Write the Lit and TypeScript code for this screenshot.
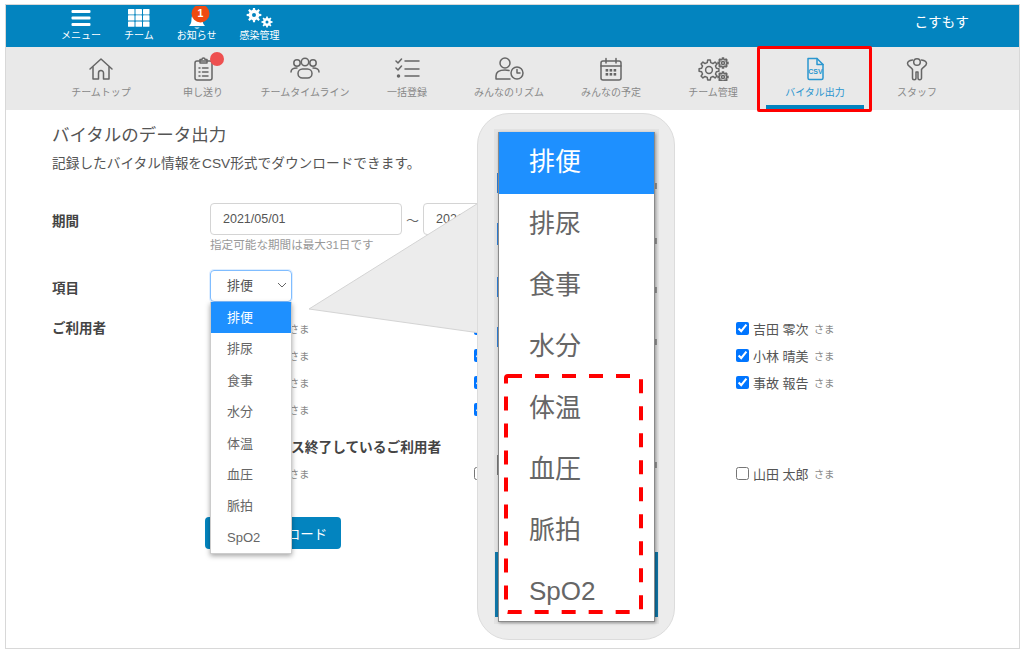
import { LitElement, html, css, svg } from 'lit';
import { customElement } from 'lit/decorators.js';

const OPTIONS = ['排便', '排尿', '食事', '水分', '体温', '血圧', '脈拍', 'SpO2'];

const USERS = [
  ['青木 一郎', '伊藤 和子', '吉田 零次'],
  ['上田 次郎', '加藤 正男', '小林 晴美'],
  ['大野 花子', '木村 幸子', '事故 報告'],
  ['岡田 三郎', '斎藤 春子', ''],
];
const RETIRED = ['佐藤 良子', '田中 健一', '山田 太郎'];

// spots of the page that show beside the enlarged list
const BLIPS = [
  [497, 173, 20, '#2f80d8'], [497, 223, 22, '#2f80d8'], [497, 277, 20, '#2f80d8'], [497, 327, 20, '#2f80d8'],
  [655, 183, 6, '#999'], [655, 238, 6, '#999'], [655, 287, 6, '#999'], [655, 339, 6, '#999'],
  [497, 455, 20, '#777'], [655, 462, 6, '#999'],
];

function gearPath(cx: number, cy: number, r1: number, r2: number, teeth: number) {
  const pts: string[] = [];
  const step = (Math.PI * 2) / teeth;
  for (let i = 0; i < teeth; i++) {
    const a = i * step;
    [[-0.3, r1], [-0.17, r2], [0.17, r2], [0.3, r1]].forEach(([t, r]) => {
      const x = cx + Math.cos(a + t * step) * r;
      const y = cy + Math.sin(a + t * step) * r;
      pts.push(`${x.toFixed(2)} ${y.toFixed(2)}`);
    });
  }
  return 'M' + pts.join('L') + 'Z';
}

const menuIcon = html`<svg width="20" height="18" viewBox="0 0 20 18"><g fill="#fff">
  <rect x="0.5" y="1" width="19" height="3" rx="1"/><rect x="0.5" y="7.5" width="19" height="3" rx="1"/><rect x="0.5" y="14" width="19" height="3" rx="1"/>
</g></svg>`;

const gridIcon = html`<svg width="22" height="18" viewBox="0 0 22 18"><g fill="#fff">
  ${[0, 7.5, 15].map((x) => [0, 6.2, 12.4].map((y) => svg`<rect x=${x} y=${y} width="6.5" height="5.4" rx="0.6"/>`))}
</g></svg>`;

const bellIcon = html`<svg class="bell" width="26" height="24" viewBox="0 0 26 24">
  <path fill="#fff" d="M5 20c2-2 2.5-4 2.5-7 0-3.500 2.500-6 5.500-6s5.500 2.500 5.500 6c0 3 .5 5 2.500 7z"/>
  <path fill="#fff" d="M10.500 21.500h5c-.5 1.500-4.500 1.500-5 0z"/>
  <circle cx="16.500" cy="7.500" r="9" fill="#ef4a10"/>
  <text x="16.500" y="11.300" font-size="10.500" font-weight="700" fill="#fff" text-anchor="middle" font-family="Liberation Sans">1</text>
</svg>`;

const infectionIcon = html`<svg class="gears" width="34" height="20" viewBox="0 0 34 20">
  <path fill="#fff" fill-rule="evenodd" d=${gearPath(11, 7, 5.3, 7.4, 8) + 'M13 7a2 2 0 1 0-4 0a2 2 0 1 0 4 0z'}/>
  <path fill="#fff" fill-rule="evenodd" d=${gearPath(24, 14, 4, 5.6, 8) + 'M25.500 14a1.500 1.500 0 1 0-3 0a1.500 1.500 0 1 0 3 0z'}/>
</svg>`;

const homeIcon = svg`<path d="M2 12 13 2l11 10"/><path d="M5 10v12h5.500v-6a2.500 2.500 0 0 1 5 0v6H21V10"/>`;

const noteIcon = svg`<rect x="3" y="4" width="17" height="19" rx="2"/><path d="M8 4V2.500h2a1.500 1.500 0 0 1 3 0h2V6H8z"/>
  <path d="M10.500 11H16M10.500 15H16M10.500 19H16"/><path d="M7 11h1M7 15h1M7 19h1"/>`;

const peopleIcon = svg`<circle cx="7" cy="6" r="3.200"/><circle cx="15" cy="5" r="3.700"/><circle cx="23" cy="6" r="3.200"/>
  <path d="M1 15c0-3 2-4 6-4"/><path d="M29 15c0-3-2-4-6-4"/>
  <rect x="8" y="12" width="14" height="9" rx="4.500"/>`;

const checklistIcon = svg`<path d="M1 4l2 2 3.500-4M1 11l2 2 3.500-4"/><path d="M10 4h14M10 12h14M10 19h14"/>
  <circle cx="3.500" cy="19" r="1" fill="#666"/>`;

const rhythmIcon = svg`<circle cx="11" cy="6" r="5"/><path d="M2 22v-3c0-4 3-6 9-6 1.500 0 3 .2 4 .5M2 22h14"/>
  <circle cx="23" cy="16" r="6"/><path d="M23 12.500V16h3"/>`;

const calendarIcon = svg`<rect x="2" y="4" width="20" height="19" rx="2"/><path d="M2 9h20M7 1.500V6M17 1.500V6"/>
  <g fill="#666" stroke="none">${[7, 11, 15].map((x) => [12, 16].map((y) => svg`<rect x=${x - 0.4} y=${y} width="2.600" height="2.600"/>`))}</g>`;

const teamIcon = svg`<path d=${gearPath(11, 13, 7.6, 10, 8)}/><circle cx="11" cy="13" r="3.400"/>
  <path d=${gearPath(25, 6, 3.600, 5, 8)}/><circle cx="25" cy="6" r="1.500"/>
  <path d=${gearPath(25, 20, 3.600, 5, 8)}/><circle cx="25" cy="20" r="1.500"/>`;

const csvIcon = svg`<path d="M3 1.500h9l6 6V21a1.500 1.500 0 0 1-1.500 1.500h-12A1.500 1.500 0 0 1 3 21z" stroke="#2a96cf"/><path d="M12 1.500v6h6" stroke="#2a96cf"/>
  <text x="10.500" y="16.500" font-size="7" font-weight="700" fill="#2a96cf" stroke="none" text-anchor="middle" font-family="Liberation Sans">CSV</text>`;

const staffIcon = svg`<circle cx="11" cy="5" r="3.300"/>
  <path d="M6.500 3C3.500 3.500 1.500 4.500 1.500 6.500c0 2.500 3.500 3.500 5 6V21a1.750 1.750 0 0 0 3.500 0v-6h2v6a1.750 1.750 0 0 0 3.500 0v-8.500c1.500-2.500 5-3.500 5-6 0-2-2-3-5-3.500"/>`;

const TABS = [
  { label: 'チームトップ', icon: homeIcon, w: 26 },
  { label: '申し送り', icon: noteIcon, w: 23, dot: true },
  { label: 'チームタイムライン', icon: peopleIcon, w: 30 },
  { label: '一括登録', icon: checklistIcon, w: 25 },
  { label: 'みんなのリズム', icon: rhythmIcon, w: 30 },
  { label: 'みんなの予定', icon: calendarIcon, w: 24 },
  { label: 'チーム管理', icon: teamIcon, w: 31 },
  { label: 'バイタル出力', icon: csvIcon, w: 21, active: true },
  { label: 'スタッフ', icon: staffIcon, w: 22 },
];

@customElement('app-root')
export class AppRoot extends LitElement {
  static styles = css`
    :host {
      display: block;
      position: relative;
      width: 1024px;
      height: 653px;
      overflow: hidden;
      background: #fff;
      font-family: "Liberation Sans", "Noto Sans CJK JP", sans-serif;
      color: #555;
    }
    .frame {
      box-sizing: border-box;
      margin: 4px 4px 0 5px;
      height: 645px;
      border: 1px solid #d8d8d8;
    }
    .topbar {
      display: flex;
      align-items: flex-start;
      gap: 23px;
      height: 42px;
      padding: 4px 50px 0 55px;
      box-sizing: border-box;
      background: #0384bf;
      color: #fff;
    }
    .top-item {
      display: flex;
      flex-direction: column;
      align-items: center;
      font-size: 10px;
      line-height: 13px;
    }
    .top-item svg { display: block; flex: none; margin-bottom: 1.5px; }
    .top-item .bell { margin: -3.5px 0 -1px; }
    .top-item .gears { margin: -1px 0 0.5px; }
    .user {
      margin-left: auto;
      font-size: 13.7px;
      line-height: 20px;
      margin-top: 4px;
    }
    .tabs {
      display: flex;
      height: 63px;
      padding-left: 44px;
      background: #e9e9e9;
    }
    .tab {
      position: relative;
      display: flex;
      flex-direction: column;
      align-items: center;
      width: 102px;
      padding-top: 10px;
      box-sizing: border-box;
      font-size: 10px;
      line-height: 14px;
      color: #888;
    }
    .tab svg {
      display: block;
      height: 24px;
      margin-bottom: 5px;
      fill: none;
      stroke: #666;
      stroke-width: 1.5;
      stroke-linecap: round;
      stroke-linejoin: round;
    }
    .tab.active { color: #2a96cf; }
    .tab .bar {
      width: 98px;
      height: 5px;
      margin-top: auto;
      background: #0384bf;
    }
    .tab .dot {
      position: absolute;
      top: 5px;
      left: 58px;
      width: 14px;
      height: 14px;
      border-radius: 50%;
      background: #ee5050;
    }
    .main { padding-left: 46px; }
    h1 {
      margin: 13px 0 0;
      font-size: 17.5px;
      font-weight: 400;
      line-height: 24px;
      color: #555;
    }
    .lead {
      margin: 7px 0 0;
      font-size: 13.7px;
      line-height: 20px;
      color: #555;
    }
    .row { display: flex; }
    .row-label {
      flex: none;
      width: 158px;
      padding-top: 9px;
      font-size: 13.5px;
      font-weight: 700;
      line-height: 20px;
      color: #444;
    }
    .period { margin-top: 29px; }
    .dates { display: flex; align-items: center; }
    .date {
      box-sizing: border-box;
      width: 192px;
      height: 32px;
      padding: 0 12px;
      border: 1px solid #d4d4d4;
      border-radius: 4px;
      font-size: 12.5px;
      line-height: 30px;
      color: #555;
    }
    .tilde { width: 21px; text-align: center; font-size: 13px; color: #666; }
    .hint { margin-top: 2px; font-size: 11.6px; line-height: 16px; color: #999; }
    .item-row { margin-top: 17px; }
    .select {
      position: relative;
      box-sizing: border-box;
      display: flex;
      align-items: center;
      justify-content: space-between;
      width: 82px;
      height: 32px;
      padding: 0 4px 3px 16px;
      border: 1px solid #80bdff;
      border-radius: 4px;
      box-shadow: 0 0 0 1px rgba(128, 189, 255, 0.25);
      font-size: 13px;
      color: #555;
    }
    .popup {
      position: absolute;
      z-index: 2;
      top: 31px;
      left: -1px;
      width: 80px;
      background: #fff;
      border: 1px solid #ccc;
      border-top: 0;
      box-shadow: 0 2px 5px rgba(0, 0, 0, 0.35);
    }
    .option {
      height: 31.4px;
      padding-left: 16px;
      font-size: 13px;
      line-height: 31px;
      color: #666;
    }
    .option.on { background: #1e90ff; color: #fff; }
    .users-row { margin-top: 13px; }
    .users-row .row-label { padding-top: 4px; }
    .users {
      display: grid;
      grid-template-columns: repeat(3, 262.5px);
      padding-left: 1px;
    }
    .user-cell {
      display: flex;
      align-items: center;
      height: 27px;
      font-size: 13px;
      color: #555;
    }
    .user-cell input { margin: 0 4px 0 0; }
    .user-cell small { margin-left: 5px; font-size: 10.5px; color: #888; }
    .retired {
      margin-left: 158px;
    }
    .retired-title {
      margin: 15px 0 2px 198px;
      font-size: 13.7px;
      font-weight: 700;
      line-height: 20px;
      color: #444;
    }
    .download {
      width: 136px;
      height: 32px;
      margin: 30px 0 0 153px;
      border: 0;
      border-radius: 4px;
      background: #0384bf;
      color: #fff;
      font: inherit;
      font-size: 13.5px;
      padding: 0;
    }

    /* enlarged callout on top of the page */
    .callout {
      position: absolute;
      z-index: 3;
      left: 0;
      top: 0;
      pointer-events: none;
    }
    .bubble {
      position: absolute;
      z-index: 3;
      left: 477px;
      top: 113px;
      box-sizing: border-box;
      width: 198px;
      height: 527px;
      border: 1px solid #dcdcdc;
      border-radius: 32px;
      background: #ececec;
    }
    .shot {
      position: absolute;
      left: 16px;
      top: 15px;
      width: 165px;
      height: 495px;
      background: #e3e3e3;
    }
    .shot .btn {
      position: absolute;
      left: 1px;
      right: 1px;
      top: 423px;
      height: 65px;
      background: #0f76a8;
    }
    .blip { position: absolute; width: 2px; }
    .big-list {
      position: absolute;
      z-index: 4;
      left: 498px;
      top: 132px;
      box-sizing: border-box;
      width: 157px;
      height: 490px;
      background: #fff;
      border: 1px solid #8a8a8a;
      border-top: 0;
      box-shadow: 1px 1px 3px rgba(0, 0, 0, 0.35);
    }
    .big-list .option {
      height: 61.2px;
      padding-left: 30px;
      font-size: 26px;
      line-height: 61px;
    }
    .big-list .option.on { height: 62px; }
    .mark {
      position: absolute;
      z-index: 5;
      left: 757px;
      top: 46px;
      box-sizing: border-box;
      width: 115px;
      height: 66px;
      border: 3px solid #f00;
      border-radius: 2px;
    }
    .callout.top { z-index: 5; }
  `;

  options() {
    return OPTIONS.map((o, i) => html`<div class="option ${i === 0 ? 'on' : ''}">${o}</div>`);
  }

  userCell(name: string, checked: boolean) {
    if (!name) return html`<div></div>`;
    return html`<label class="user-cell"><input type="checkbox" .checked=${checked} />${name}<small>さま</small></label>`;
  }

  render() {
    return html`
      <div class="frame">
        <header class="topbar">
          <div class="top-item">${menuIcon}メニュー</div>
          <div class="top-item">${gridIcon}チーム</div>
          <div class="top-item">${bellIcon}お知らせ</div>
          <div class="top-item">${infectionIcon}感染管理</div>
          <div class="user">こすもす</div>
        </header>
        <nav class="tabs">
          ${TABS.map((t) => html`
            <div class="tab ${t.active ? 'active' : ''}">
              <svg width=${t.w} viewBox="0 0 ${t.w} 24">${t.icon}</svg>
              ${t.label}
              ${t.dot ? html`<span class="dot"></span>` : ''}
              ${t.active ? html`<span class="bar"></span>` : ''}
            </div>`)}
        </nav>
        <main class="main">
          <h1>バイタルのデータ出力</h1>
          <p class="lead">記録したバイタル情報をCSV形式でダウンロードできます。</p>
          <div class="row period">
            <div class="row-label">期間</div>
            <div>
              <div class="dates">
                <div class="date">2021/05/01</div>
                <span class="tilde">～</span>
                <div class="date">2021/05/31</div>
              </div>
              <div class="hint">指定可能な期間は最大31日です</div>
            </div>
          </div>
          <div class="row item-row">
            <div class="row-label">項目</div>
            <div class="select">
              排便
              <svg width="10" height="6" viewBox="0 0 10 6"><path d="M1 1l4 4 4-4" fill="none" stroke="#666" stroke-width="1"/></svg>
              <div class="popup">${this.options()}</div>
            </div>
          </div>
          <div class="row users-row">
            <div class="row-label">ご利用者</div>
            <div class="users">
              ${USERS.flat().map((n) => this.userCell(n, true))}
            </div>
          </div>
          <div class="retired-title">サービス終了しているご利用者</div>
          <div class="users retired">
            ${RETIRED.map((n) => this.userCell(n, false))}
          </div>
          <button class="download">CSVダウンロード</button>
        </main>
      </div>

      <svg class="callout" width="1024" height="653" viewBox="0 0 1024 653">
        <polygon points="309,309 480,202 480,333" fill="#ececec" stroke="#d4d4d4" stroke-width="1"/>
      </svg>
      <div class="bubble">
        <div class="shot"><div class="btn"></div></div>
        ${BLIPS.map(([x, y, h, c]) => html`<span class="blip" style="left:${(x as number) - 478}px;top:${(y as number) - 114}px;height:${h}px;background:${c}"></span>`)}
      </div>
      <div class="big-list">${this.options()}</div>
      <svg class="callout top" width="1024" height="653" viewBox="0 0 1024 653">
        <rect x="506" y="376" width="135" height="236" rx="2" fill="none" stroke="#f00" stroke-width="4" stroke-dasharray="14 13"/>
      </svg>
      <div class="mark"></div>
    `;
  }
}
